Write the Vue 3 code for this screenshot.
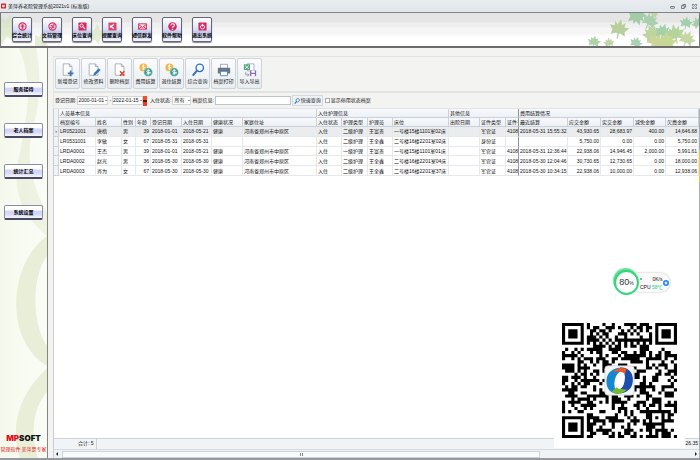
<script setup>
import { ref } from 'vue'

const mainMenu = [
  { label: '综合统计', icon: 'stats' },
  { label: '文档管理', icon: 'docs' },
  { label: '床位查询', icon: 'bed' },
  { label: '提醒查询', icon: 'remind' },
  { label: '短信群发', icon: 'mail' },
  { label: '软件帮助', icon: 'help' },
  { label: '退出系统', icon: 'exit' }
]
const sideMenu = ['服务接待', '老人档案', '统计汇总', '系统设置']
const tools = [
  { label: '新增登记', icon: 'add' },
  { label: '修改资料', icon: 'edit' },
  { label: '删除档案', icon: 'remove' },
  { label: '费用结算', icon: 'coins' },
  { label: '退住结算', icon: 'coins' },
  { label: '综合查询', icon: 'search' },
  { label: '档案打印', icon: 'print' },
  { label: '导入导出', icon: 'transfer' }
]

const dateFrom = ref('2000-01-01')
const dateTo = ref('2022-01-15')
const keyword = ref('')
const showDisabled = ref(false)

const groups = [
  { label: '人员基本信息', span: 8 },
  { label: '入住护理信息', span: 4 },
  { label: '其他信息', span: 3 },
  { label: '费用结算情况', span: 5 }
]
const columns = [
  { label: '档案编号', w: 37 },
  { label: '姓名', w: 26 },
  { label: '性别', w: 14 },
  { label: '年龄', w: 15, num: true },
  { label: '登记日期', w: 31 },
  { label: '入住日期', w: 30 },
  { label: '健康状况', w: 31 },
  { label: '家庭住址', w: 74 },
  { label: '入住状态', w: 25 },
  { label: '护理类型', w: 26 },
  { label: '护理员', w: 25 },
  { label: '床位', w: 56 },
  { label: '出院日期', w: 31 },
  { label: '证件类型', w: 26 },
  { label: '证件号', w: 13, frozen: true },
  { label: '最近结算', w: 49 },
  { label: '应交金额', w: 33, num: true },
  { label: '实交金额', w: 33, num: true },
  { label: '减免金额', w: 32, num: true },
  { label: '欠费金额', w: 33, num: true }
]
const home = '河南省郑州市中原区'
const rows = [
  ['LR0521001', '唐楷', '男', '39', '2018-01-01', '2018-05-21', '健康', home, '入住', '二级护理', '王富贵', '一号楼15楼1101室02床', '', '军官证', '41088', '2018-05-31 15:55:32', '43,930.65', '28,683.97', '400.00', '14,646.68'],
  ['LR0531001', '李敏', '女', '67', '2018-05-31', '2018-05-31', '', '', '入住', '二级护理', '王全鑫', '二号楼16楼2201室02床', '', '身份证', '', '', '5,750.00', '0.00', '0.00', '5,750.00'],
  ['LRDA0001', '王杰', '男', '39', '2018-01-01', '2018-05-21', '健康', home, '入住', '一级护理', '王富贵', '一号楼15楼1101室01床', '', '军官证', '41088', '2018-05-31 12:36:44', '22,938.06', '14,946.45', '2,000.00', '5,991.61'],
  ['LRDA0002', '赵光', '男', '36', '2018-05-30', '2018-05-30', '健康', home, '入住', '二级护理', '王全鑫', '二号楼16楼2201室04床', '', '军官证', '41088', '2018-05-30 12:04:46', '30,730.65', '12,730.65', '0.00', '18,000.00'],
  ['LRDA0003', '肖为', '女', '67', '2018-05-30', '2018-05-30', '健康', home, '入住', '二级护理', '王全鑫', '二号楼16楼2201室37床', '', '军官证', '41088', '2018-05-30 10:34:15', '22,938.06', '10,000.00', '0.00', '12,938.06']
]

const leaves = [
  [95, 42, 6, 10, '#aed2a8'], [110, 43, 5, -8, '#bcd6a6'], [137, 43, 6, 20, '#a9d2b0'],
  [120, 29, 9, 12, '#b7cf9c'], [138, 16, 9, 165, '#a3cba6'], [151, 21, 8, 30, '#a9cfae'],
  [155, 13, 5, 80, '#c2d2a2'], [153, 34, 9, -20, '#bcd4a0'], [164, 32, 8, 15, '#a4d0aa'],
  [176, 34, 9, -12, '#b4d49c'], [167, 42, 10, 5, '#c9d795'], [156, 42, 8, 40, '#cbd59a'],
  [187, 23, 6, 10, '#a3d0aa'], [188, 39, 8, 25, '#c6d7a6'], [199, 23, 6, -30, '#a3d0aa']
]

// QR symbol, version 5 (37 x 37 modules)
const N = 37
function finder(r, c) {
  for (const [fr, fc] of [[0, 0], [0, N - 7], [N - 7, 0]]) {
    const y = r - fr
    const x = c - fc
    if (y >= -1 && y <= 7 && x >= -1 && x <= 7) {
      const d = Math.max(Math.abs(y - 3), Math.abs(x - 3))
      return d === 3 || d <= 1 ? 1 : 0
    }
  }
  return -1
}
let seed = 20210115
function bit() {
  seed = (seed * 1103515245 + 12345) % 2147483648
  return (seed >> 16) & 1
}
let qrPath = ''
for (let r = 0; r < N; r++) {
  for (let c = 0; c < N; c++) {
    const b = bit()
    const f = finder(r, c)
    const d = Math.max(Math.abs(r - 30), Math.abs(c - 30))
    let on = b
    if (f >= 0) on = f
    else if (d <= 2) on = d !== 1
    else if (r === 6 || c === 6) on = (r + c) % 2 === 0
    if (on) qrPath += `M${c} ${r}h1v1h-1z`
  }
}
</script>

<template>
  <div class="app">
    <header class="titlebar">
      <svg class="app-icon" viewBox="0 0 10 10"><rect width="10" height="10" rx="1" fill="#d8202c" /><path d="M2.500 2v4.500L5 8l2.500-1.500V2L5 4z" fill="#fff" /></svg>
      <h1>美萍养老院管理系统2021v1 (标准版)</h1>
      <div class="win">
        <button aria-label="最小化"><svg viewBox="0 0 10 10"><rect x="1" y="5" width="8" height="3.500" rx="1" /></svg></button>
        <button aria-label="还原"><svg viewBox="0 0 10 10"><path d="M3.500 3.500V1h5.500v5.500H6.500M1 3.500h5.500V9H1z" /></svg></button>
        <button aria-label="关闭"><svg viewBox="0 0 10 10"><path d="M1 1h2.500L5 3l1.500-2H9v2.500L7.500 5 9 6.500V9H6.500L5 7.500 3.500 9H1V6.500L2.500 5 1 3.500z" /></svg></button>
      </div>
    </header>

    <nav class="mainbar">
      <svg class="leaves left" viewBox="0 0 120 33">
        <g fill="#cfe0b4" opacity=".55">
          <path d="M0 4l5 4 4-7 2 8 9-3-5 8 8 4-10 2 1 9-8-5-6 8z" />
          <path d="M34 22l4 2 3-5 1 6 6-1-4 4 3 5H34z" />
          <path d="M88 16l5 1 4-6 2 6 9-2-6 6 5 4-8 1-1 6-4-5-8 2 4-6z" />
        </g>
      </svg>
      <svg class="leaves right" viewBox="0 0 200 46">
        <defs>
          <path id="leaf" d="M0-11L2.500-5 6-8 5.500-3 11-3 7 2 8 7 2.500 4.500 .8 5 1 11H-.4L-.8 5-2.500 4.500-8 7-7 2-11-3-5.500-3-6-8-2.500-5z" />
        </defs>
        <use v-for="(l, i) in leaves" :key="i" href="#leaf" :fill="l[4]" :transform="`translate(${l[0]} ${l[1]}) rotate(${l[3]}) scale(${l[2] / 10})`" />
      </svg>
      <button v-for="m in mainMenu" :key="m.label" class="mainbtn">
        <svg viewBox="0 0 20 20">
          <g v-if="m.icon === 'stats'" fill="none" stroke="#d9285c" stroke-width="2.500"><circle cx="10" cy="10" r="8" /><path d="M6 7h8M6 10.500h8M8 14h4M10 5v9" stroke-width="2" /></g>
          <g v-else-if="m.icon === 'docs'" fill="none" stroke="#d9285c" stroke-width="2.500"><circle cx="10" cy="10" r="8" /><path d="M5 12q5 4 6-2t5-3M6 7l8 6" /></g>
          <g v-else-if="m.icon === 'bed'"><rect x="1" y="1" width="18" height="18" rx="2" fill="#d9285c" /><circle cx="8" cy="8" r="3.500" fill="none" stroke="#fff" stroke-width="2" /><path d="M11 11l5 5" stroke="#fff" stroke-width="2.500" /></g>
          <g v-else-if="m.icon === 'remind'"><rect x="1" y="1" width="18" height="18" rx="2" fill="#d9486c" /><path d="M4 8h3l6-4v12l-6-4H4z" fill="#fff" /><circle cx="12" cy="10" r="2" fill="#d9285c" /></g>
          <g v-else-if="m.icon === 'mail'" fill="#f7c6d0" stroke="#cf3357" stroke-width="2"><path d="M1 4h18v12H1zM1 5l9 7 9-7M1 16l7-6M19 16l-7-6" /></g>
          <g v-else-if="m.icon === 'help'"><circle cx="10" cy="10" r="9.500" fill="#d9285c" /><path d="M6.500 8q0-4 4-4t3.500 3.500q0 2-4 4v1.500M10 15v2.500" fill="none" stroke="#fff" stroke-width="2.500" /></g>
          <g v-else><rect x="1" y="1" width="18" height="18" rx="2" fill="#d9285c" /><circle cx="10" cy="11" r="4.500" fill="none" stroke="#fff" stroke-width="2" /><path d="M10 4v6" stroke="#fff" stroke-width="2" /></g>
        </svg>
        <span>{{ m.label }}</span>
      </button>
    </nav>

    <div class="body">
      <aside class="side">
        <svg class="arcs" viewBox="0 0 47 410" preserveAspectRatio="none">
          <g fill="#e8eed8">
            <path d="M19 0H36Q44 40 33 80T47 165V188Q12 160 17 118Q26 80 28 50Q28 20 19 0z" opacity=".7" />
            <path d="M47 188C8 216 4 292 47 318V298C32 276 31 230 47 208z" />
            <path d="M47 320C28 338 16 360 16 384Q16 400 20 410H38C30 385 33 360 47 344z" />
          </g>
        </svg>
        <div class="side-menu">
          <button v-for="s in sideMenu" :key="s">{{ s }}</button>
        </div>
        <div class="brand">
          <strong><em>MP</em>SOFT</strong>
          <p><span>管理软件</span><span>美萍是专家</span></p>
        </div>
      </aside>

      <main class="content">
        <div class="toolbox">
          <button v-for="t in tools" :key="t.label">
            <svg viewBox="0 0 32 32">
              <g v-if="['add', 'edit', 'remove'].includes(t.icon)">
                <path d="M5 2h14l6 6v20H5z" fill="#fff" stroke="#8a9099" stroke-width="1.500" /><path d="M19 2v6h6" fill="none" stroke="#8a9099" stroke-width="1.500" />
                <path v-if="t.icon === 'add'" d="M22 17v13M15.500 23.500h13" stroke="#3f78b5" stroke-width="4" />
                <path v-else-if="t.icon === 'edit'" d="M14 29l2-6L27 12l4 4-11 11z" fill="#3576b8" />
                <path v-else d="M16 19l10 10M26 19L16 29" stroke="#e0402c" stroke-width="3.500" />
              </g>
              <g v-else-if="t.icon === 'coins'">
                <circle cx="10" cy="10" r="9" fill="#efb845" /><circle cx="21" cy="21" r="10" fill="#4aa092" stroke="#f2f5f8" />
                <path d="M12.500 6q-5-2-5 1t5 3-5 3M10 3v13" fill="none" stroke="#fff" stroke-width="1.800" />
                <path d="M24.500 17.500q-7-2-7 1.500t7 3-7 3M21 14v14" fill="none" stroke="#fff" stroke-width="2" />
              </g>
              <g v-else-if="t.icon === 'search'" fill="none" stroke="#2f70b8"><circle cx="20" cy="11" r="8.500" stroke-width="3" /><path d="M14 17L4 29" stroke-width="4.500" /></g>
              <g v-else-if="t.icon === 'print'">
                <path d="M8 3h16v9H8z" fill="#fff" stroke="#7b8088" stroke-width="1.500" /><path d="M2 11h28v13H2z" fill="#6d747d" /><path d="M8 19h16v10H8z" fill="#fff" stroke="#4d84c2" stroke-width="2" /><path d="M10 15h12" stroke="#4d84c2" stroke-width="2" />
              </g>
              <g v-else>
                <path d="M10 2h15v16H10z" fill="#fff" stroke="#8a9099" stroke-width="1.500" /><path d="M2 3h14v13H2z" fill="#5aa682" /><path d="M5 6l8 7M13 6l-8 7" stroke="#fff" stroke-width="1.800" /><path d="M16 17h14v13H16z" fill="#8b6bb5" /><path d="M19 17h8v5h-8zM19 25h8v5h-8z" fill="#fff" /><path d="M6 20v7h7M10 24l4 3-4 3" fill="none" stroke="#7b8088" stroke-width="1.500" />
              </g>
            </svg>
            <span>{{ t.label }}</span>
          </button>
        </div>

        <form class="filters" @submit.prevent>
          <label for="from">登记日期:</label>
          <span class="combo"><input id="from" v-model="dateFrom" type="text" /><button type="button" aria-label="选择开始日期"></button></span>
          <span>-</span>
          <span class="combo"><input v-model="dateTo" type="text" aria-label="结束日期" /><button type="button" aria-label="选择结束日期"></button></span>
          <button type="button" class="range" aria-label="日期范围"></button>
          <label for="state">入住状态:</label>
          <span class="combo small"><select id="state"><option>所有</option></select></span>
          <label for="kw">档案信息:</label>
          <input id="kw" v-model="keyword" class="keyword" type="text" />
          <button class="query"><svg viewBox="0 0 16 16"><circle cx="10" cy="6" r="4.500" fill="none" stroke="#2f70b8" stroke-width="2" /><path d="M7 9l-5 6" stroke="#2f70b8" stroke-width="3" /></svg>快速查询</button>
          <label class="check"><input v-model="showDisabled" type="checkbox" />显示停用状态档案</label>
        </form>

        <section class="grid">
          <table>
            <colgroup>
              <col class="mark-col" />
              <col v-for="c in columns" :key="c.label" :style="{ width: c.w + 'px' }" />
            </colgroup>
            <thead>
              <tr>
                <th rowspan="2" class="mark"></th>
                <th v-for="(g, i) in groups" :key="g.label" :colspan="g.span" :class="{ frozen: i === 2 }">{{ g.label }}</th>
              </tr>
              <tr>
                <th v-for="c in columns" :key="c.label" :class="{ frozen: c.frozen }">{{ c.label }}</th>
              </tr>
            </thead>
            <tbody>
              <tr v-for="(r, i) in rows" :key="r[0]" :class="{ current: i === 0 }">
                <td class="mark">{{ i === 0 ? '›' : '' }}</td>
                <td v-for="(v, j) in r" :key="j" :class="{ num: columns[j].num, frozen: columns[j].frozen }">{{ v }}</td>
              </tr>
            </tbody>
          </table>
          <div class="summary"><span class="count">合计: 5</span><span>26.35</span></div>
          <div class="scroll"><i class="arrow prev"></i><div class="track"><div class="thumb"></div></div><i class="arrow next"></i></div>
        </section>
      </main>
    </div>

    <div class="edge-tab"></div>

    <div class="monitor">
      <div class="pill">
        <div class="stats">
          <div class="line"><i></i><span>0K/s</span></div>
          <div>CPU <b>58℃</b></div>
        </div>
        <svg viewBox="0 0 12 12"><circle cx="6" cy="6" r="6" fill="#2585f0" /><path d="M6 3v6M3 6h6" stroke="#fff" stroke-width="2" /></svg>
      </div>
      <div class="ring"><span>80<small>%</small></span></div>
    </div>

    <div class="qr">
      <svg viewBox="0 0 37 37">
        <path :d="qrPath" fill="#000" />
        <rect x="13.800" y="13.800" width="9.400" height="9.400" rx="1" fill="#f4f6f7" stroke="#d6dadd" stroke-width=".3" />
        <path d="M18.200 14.400Q14.200 15.200 14.300 19t4.400 3.900Q16.200 21.500 17 18.200T20.500 15.500z" fill="#1688cf" />
        <path d="M18.900 22.700Q22.900 21.900 22.800 18.100T18.400 14.200Q20.900 15.600 20.100 18.900T16.600 21.600z" fill="#1a4fae" />
        <path d="M20.900 21.500Q18.600 23.600 15.900 22.200L17.600 20.700Q18.900 21.500 20.900 21.500z" fill="#7ab82c" />
        <path d="M16.400 15.900Q17.800 13.900 20.800 14.700L20.300 16.300Q18.500 15.200 16.400 15.900z" fill="#ee5a24" />
        <path d="M19.500 16.200Q17.400 16 17.300 18.500t1.200 2.700Q20 20.500 20 18.500t-.5-2.300z" fill="#fff" />
      </svg>
    </div>
  </div>
</template>

<style>
body {
  margin: 0;
}
</style>

<style scoped>
.app {
  position: relative;
  display: flex;
  flex-direction: column;
  box-sizing: border-box;
  min-height: 100vh;
  border-bottom: 2px solid #96999d;
  background: #f3f3f1;
  color: #111;
  font: 5px/9px "Liberation Sans", "Noto Sans CJK SC", sans-serif;
  white-space: nowrap;
}
button,
input,
select {
  box-sizing: border-box;
  margin: 0;
  padding: 0;
  border: 0;
  background: none;
  color: inherit;
  font: inherit;
}
.titlebar {
  display: flex;
  align-items: center;
  gap: 2px;
  box-sizing: border-box;
  height: 13px;
  padding: 0 3px 0 1px;
  border-bottom: 1px solid #80848b;
  background: linear-gradient(#e9edf1, #e1e6ea);
}
.app-icon {
  width: 5px;
  height: 6px;
}
h1 {
  flex: 1;
  margin: 0;
  font-size: 5px;
  font-weight: 400;
}
.win {
  display: flex;
  gap: 6px;
}
.win button {
  display: flex;
}
.win svg {
  width: 5px;
  height: 5px;
  fill: none;
  stroke: #555b63;
  stroke-width: 1.500;
}
.mainbar {
  position: relative;
  display: flex;
  align-items: center;
  gap: 10px;
  box-sizing: border-box;
  height: 35px;
  padding: 0 11px;
  border-bottom: 2px solid #6b6b6b;
  border-left: 1px solid #777;
  border-right: 1px solid #777;
  background: linear-gradient(#e5e5e5 0 9px, #efefef 10px 14px, #f5f5f5 15px 20px, #fff 24px);
  overflow: hidden;
}
.leaves {
  position: absolute;
  bottom: 0;
}
.leaves.left {
  left: 0;
  width: 120px;
}
.leaves.right {
  right: 0;
  width: 200px;
  height: 46px;
}
.mainbtn {
  position: relative;
  display: flex;
  flex-direction: column;
  align-items: center;
  width: 20px;
  height: 25px;
  padding-top: 4px;
  border: 1px solid #62657c;
  border-radius: 2px;
  background: linear-gradient(#fff, #dcdff2 50%, #c3c9ec 60%, #f4f5fc);
  box-shadow: 0 1px 1px #888;
  color: #000;
  font-weight: 700;
}
.mainbtn svg {
  width: 9px;
  height: 9px;
}
.body {
  flex: 1;
  display: flex;
}
.side {
  position: relative;
  flex: none;
  display: flex;
  flex-direction: column;
  justify-content: space-between;
  box-sizing: border-box;
  width: 48px;
  border-right: 1px solid #85877f;
  background: linear-gradient(90deg, #f5f9ec, #fafdf6);
}
.arcs {
  position: absolute;
  inset: 0;
  width: 100%;
  height: 100%;
}
.side-menu {
  position: relative;
  display: flex;
  flex-direction: column;
  gap: 26px;
  padding: 34px 4px 0;
}
.side-menu button {
  height: 15px;
  border: 1px solid #8a8ca8;
  border-bottom: 2px solid #4a4862;
  border-radius: 2px;
  background: linear-gradient(#fff 30%, #d3d6f4 45%, #d3d6f4 65%, #f6f6fd);
  color: #000;
  font-weight: 700;
}
.brand {
  position: relative;
  padding-bottom: 4px;
  text-align: center;
}
.brand strong {
  display: block;
  font: 900 8px/10px Inter, "Liberation Sans", sans-serif;
  color: #111;
}
.brand em {
  color: #e01020;
  font-style: normal;
}
.brand p {
  display: flex;
  justify-content: center;
  gap: 1px;
  margin: 2px 0 0;
  color: #e01818;
}
.content {
  flex: 1;
  display: flex;
  flex-direction: column;
  min-width: 0;
  padding-left: 5px;
}
.toolbox {
  display: flex;
  gap: 1px;
  margin-top: 8px;
  padding: 1px 1px 2px;
  border: 1px solid #e2e3e3;
  border-right: 0;
}
.toolbox button {
  display: flex;
  flex-direction: column;
  align-items: center;
  justify-content: space-between;
  width: 25px;
  height: 31px;
  padding: 4px 0 2px;
  border: 1px solid #ccd3da;
  border-radius: 2px;
  background: linear-gradient(#fafbfc, #e8edf2);
}
.toolbox svg {
  width: 14px;
  height: 14px;
}
.filters {
  display: flex;
  align-items: center;
  gap: 1px;
  box-sizing: border-box;
  height: 17px;
  padding-left: 1px;
  border: 1px solid #e2e3e3;
  border-right: 0;
}
.combo {
  position: relative;
  display: flex;
  align-items: center;
  box-sizing: border-box;
  width: 31px;
  height: 9px;
  border: 1px solid #d0d5da;
  background: #fff;
}
.combo input {
  width: 26px;
  height: 7px;
}
.combo button {
  flex: 1;
  align-self: stretch;
}
.combo::after {
  content: "";
  position: absolute;
  right: 0;
  top: 3px;
  border: 1px solid transparent;
  border-top-color: #333;
}
.combo.small {
  width: 19px;
}
.combo select {
  width: 100%;
  height: 7px;
  padding-left: 1px;
  line-height: 7px;
  appearance: none;
}
.range {
  width: 4px;
  height: 10px;
  margin: 0 2px 0 -1px;
  background: linear-gradient(#f05030 40%, #601808 40% 60%, #e84020 60%);
}
.keyword {
  width: 76px;
  height: 9px;
  border: 1px solid #bcc4cc;
  background: #fff;
}
.query {
  display: flex;
  align-items: center;
  gap: 1px;
  height: 11px;
  padding: 0 1px;
  border: 1px solid #d3d9df;
  background: #eef2f5;
}
.query svg {
  width: 6px;
  height: 6px;
}
.check {
  display: flex;
  align-items: center;
  gap: 1px;
  padding-left: 1px;
}
.check input {
  appearance: none;
  width: 5px;
  height: 5px;
  border: 1px solid #a9aeb4;
  background: #fff;
}
.check input:checked {
  background: #3f78b5;
}
.grid {
  flex: 1;
  display: flex;
  flex-direction: column;
  border-left: 1px solid #c6cdd4;
  border-right: 1px solid #a9aeb4;
  background: #fff;
}
table {
  width: 100%;
  height: 67px;
  border-collapse: separate;
  border-spacing: 0;
  table-layout: fixed;
}
.mark-col {
  width: 5px;
}
th,
td {
  box-sizing: border-box;
  padding: 0 0 0 1px;
  border-right: 1px solid #e6e9ec;
  border-bottom: 1px solid #e6e9ec;
  overflow: hidden;
  font-weight: 400;
  line-height: 8px;
  text-align: left;
}
th {
  border-color: #cad1d9;
  background: linear-gradient(#f7f9fb, #edf1f5);
}
.mark {
  padding: 0;
  border-color: #cad1d9;
  background: #f0f3f6;
  text-align: center;
}
.current td {
  background: #ebecee;
}
.num {
  padding-right: 1px;
  text-align: right;
}
.frozen {
  border-right-color: #8e949b;
}
.summary {
  display: flex;
  justify-content: space-between;
  box-sizing: border-box;
  height: 11px;
  margin-top: auto;
  padding: 0 1px 0 24px;
  border-top: 1px solid #ccd3da;
  background: #f1f4f7;
}
.count {
  padding-right: 2px;
  border-right: 1px solid #ccd3da;
}
.scroll {
  display: flex;
  align-items: center;
  gap: 4px;
  box-sizing: border-box;
  height: 9px;
  padding: 0 2px;
  border-top: 1px solid #d5dadf;
  background: #f0f2f4;
}
.arrow {
  border: 2px solid transparent;
}
.prev {
  margin-left: -2px;
  border-right-color: #222;
}
.next {
  margin-right: -2px;
  border-left-color: #222;
}
.track {
  flex: 1;
}
.thumb {
  display: flex;
  justify-content: center;
  box-sizing: border-box;
  width: 76%;
  height: 7px;
  border: 1px solid #ccd2d8;
  background: #f9fafb;
}
.thumb::before {
  content: "";
  width: 3px;
  margin: 1px 0;
  background: repeating-linear-gradient(90deg, #888 0 1px, #fff 1px 2px);
}
.edge-tab {
  position: absolute;
  top: 150px;
  right: 0;
  width: 1px;
  height: 32px;
  background: #f5c832;
}
.monitor {
  position: absolute;
  top: 270px;
  right: 30px;
  width: 56px;
  height: 25px;
}
.pill {
  position: absolute;
  inset: 3px 0 3px 14px;
  display: flex;
  align-items: center;
  justify-content: space-between;
  padding: 0 2px 0 12px;
  border-radius: 10px;
  background: #fafafa;
  box-shadow: 0 0 2px #aaa;
}
.pill svg {
  flex: none;
  width: 6px;
  height: 6px;
}
.stats {
  line-height: 8px;
}
.line {
  display: flex;
  align-items: center;
  justify-content: space-between;
}
.line i {
  width: 2px;
  height: 2px;
  border-radius: 1px;
  background: #20c860;
}
.stats b {
  color: #20d070;
  font-weight: 400;
}
.ring {
  position: absolute;
  top: 0;
  left: 0;
  display: grid;
  place-items: center;
  box-sizing: border-box;
  width: 25px;
  height: 25px;
  border: 2px solid #35d47a;
  border-radius: 50%;
  background: #fff;
  box-shadow: -1px -2px 1px #5fe09a;
  color: #333;
  font-size: 9px;
}
.ring small {
  font-size: 5px;
}
.qr {
  position: absolute;
  right: 15px;
  bottom: 10px;
  box-sizing: border-box;
  padding: 11px 8px 10px;
  background: #fff;
}
.qr svg {
  display: block;
  width: 115px;
  height: 115px;
}
</style>
